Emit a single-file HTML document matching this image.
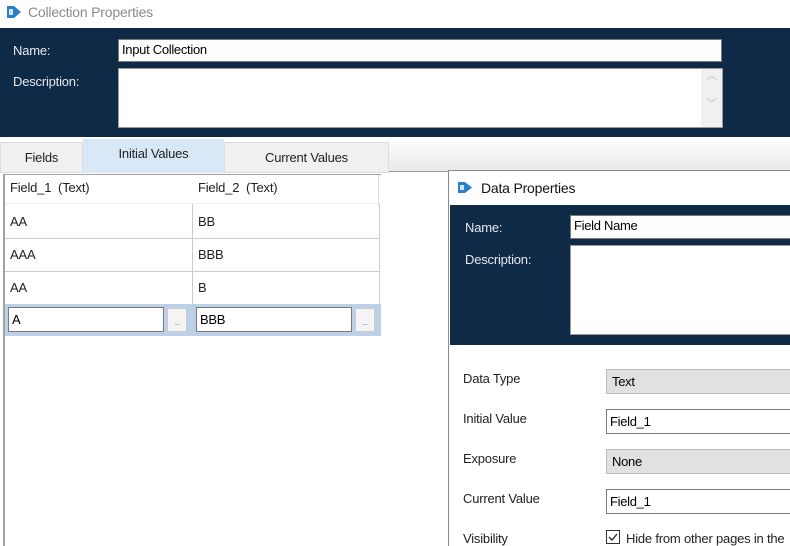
<!DOCTYPE html>
<html><head><style>
*{box-sizing:border-box;margin:0;padding:0}
html,body{width:790px;height:546px;overflow:hidden}
body{background:#fff;font-family:"Liberation Sans",sans-serif;font-size:13px;color:#000;position:relative;letter-spacing:-0.2px}
.a{position:absolute;white-space:nowrap}
.inp{position:absolute;background:#fff;border:1px solid #7a7a7a;padding:2px 3px;font-size:13px;letter-spacing:-0.3px;white-space:nowrap;overflow:hidden}
.lbl{position:absolute;color:#e6e9ee;font-size:13px}
.dl{position:absolute;color:#222;font-size:13px;white-space:nowrap}
.cell{position:absolute;font-size:13px;color:#222}
</style></head><body>
<svg class="a" style="left:6px;top:5px" width="16" height="14"><path d="M1 1h7l7 6-7 6H1z" fill="#2a7fc9"/><rect x="3" y="4" width="4" height="6" fill="#cfe3f5"/></svg>
<div class="a" style="left:28px;top:4px;font-size:14px;color:#8a8a8a">Collection Properties</div>
<div class="a" style="left:0;top:28px;width:790px;height:109px;background:#0e2a47"></div>
<div class="lbl" style="left:13px;top:43px">Name:</div>
<div class="lbl" style="left:13px;top:74px">Description:</div>
<div class="inp" style="left:118px;top:39px;width:604px;height:23px">Input Collection</div>
<div class="inp" style="left:118px;top:68px;width:605px;height:60px;border-color:#999"></div>
<div class="a" style="left:701px;top:69px;width:21px;height:58px;background:#f0f0f0;color:#bbb;font-size:11px;text-align:center;line-height:14px">︿<br><br>﹀</div>
<div class="a" style="left:380px;top:137px;width:410px;height:35px;background:linear-gradient(#fff,#e8e8e8);border-bottom:1px solid #999"></div>
<div class="a" style="left:0;top:142px;width:83px;height:31px;background:#f0f0f0;border:1px solid #ddd;text-align:center;line-height:30px;color:#222">Fields</div>
<div class="a" style="left:83px;top:139px;width:141px;height:34px;background:#d9e8f7;text-align:center;line-height:30px;color:#222">Initial Values</div>
<div class="a" style="left:224px;top:142px;width:165px;height:31px;background:#f0f0f0;border:1px solid #ddd;text-align:center;line-height:30px;color:#222">Current Values</div>
<div class="a" style="left:3px;top:174px;width:2px;height:372px;background:#a0a0a0"></div>
<div class="a" style="left:4px;top:174px;width:377px;height:1px;background:#a0a0a0"></div>
<div class="a" style="left:5px;top:175px;width:374px;height:29px;background:#fff;border-bottom:1px solid #eee"></div>
<div class="cell" style="left:10px;top:180px">Field_1&nbsp; (Text)</div>
<div class="cell" style="left:198px;top:180px">Field_2&nbsp; (Text)</div>
<div class="a" style="left:378px;top:175px;width:1px;height:30px;background:#ddd"></div>
<div class="a" style="left:5px;top:204px;width:375px;height:101px;border-right:1px solid #ccc"></div>
<div class="a" style="left:192px;top:204px;width:1px;height:100px;background:#ccc"></div>
<div class="a" style="left:5px;top:238px;width:375px;height:1px;background:#ccc"></div>
<div class="a" style="left:5px;top:271px;width:375px;height:1px;background:#ccc"></div>
<div class="a" style="left:5px;top:304px;width:375px;height:1px;background:#ccc"></div>
<div class="cell" style="left:10px;top:214px">AA</div><div class="cell" style="left:198px;top:214px">BB</div>
<div class="cell" style="left:10px;top:247px">AAA</div><div class="cell" style="left:198px;top:247px">BBB</div>
<div class="cell" style="left:10px;top:280px">AA</div><div class="cell" style="left:198px;top:280px">B</div>
<div class="a" style="left:5px;top:304px;width:376px;height:32px;background:#bcd0e8"></div>
<div class="inp" style="left:8px;top:307px;width:156px;height:25px;padding:4px 3px">A</div>
<div class="a" style="left:167px;top:308px;width:20px;height:24px;background:#f4f4f4;border:1px solid #ccc;font-size:9px;color:#666;text-align:center;line-height:26px">..</div>
<div class="inp" style="left:196px;top:307px;width:156px;height:25px;padding:4px 3px">BBB</div>
<div class="a" style="left:355px;top:308px;width:20px;height:24px;background:#f4f4f4;border:1px solid #ccc;font-size:9px;color:#666;text-align:center;line-height:26px">..</div>
<div class="a" style="left:448px;top:170px;width:342px;height:376px;background:#fff;border:1px solid #8a8a8a;border-right:none;border-bottom:none"></div>
<svg class="a" style="left:457px;top:181px" width="16" height="13"><path d="M1 1h7l7 5.5-7 5.5H1z" fill="#2a7fc9"/><rect x="3" y="4" width="4" height="5" fill="#cfe3f5"/></svg>
<div class="a" style="left:481px;top:180px;font-size:14px;color:#111">Data Properties</div>
<div class="a" style="left:450px;top:205px;width:340px;height:140px;background:#0e2a47"></div>
<div class="lbl" style="left:465px;top:220px">Name:</div>
<div class="lbl" style="left:465px;top:252px">Description:</div>
<div class="inp" style="left:570px;top:215px;width:220px;height:24px;border-right:none">Field Name</div>
<div class="inp" style="left:570px;top:245px;width:220px;height:90px;border-color:#999;border-right:none"></div>
<div class="dl" style="left:463px;top:371px">Data Type</div>
<div class="dl" style="left:463px;top:411px">Initial Value</div>
<div class="dl" style="left:463px;top:451px">Exposure</div>
<div class="dl" style="left:463px;top:491px">Current Value</div>
<div class="dl" style="left:463px;top:531px">Visibility</div>
<div class="inp" style="left:606px;top:369px;width:184px;height:25px;background:#e1e1e1;border-color:#bbb;border-right:none;padding:4px 5px">Text</div>
<div class="inp" style="left:606px;top:409px;width:184px;height:25px;border-right:none;padding:4px 3px">Field_1</div>
<div class="inp" style="left:606px;top:449px;width:184px;height:25px;background:#e1e1e1;border-color:#bbb;border-right:none;padding:4px 5px">None</div>
<div class="inp" style="left:606px;top:489px;width:184px;height:25px;border-right:none;padding:4px 3px">Field_1</div>
<svg class="a" style="left:606px;top:530px" width="15" height="15"><rect x="0.5" y="0.5" width="13" height="13" fill="#fff" stroke="#333"/><path d="M3 7l3 3 5-6" fill="none" stroke="#222" stroke-width="1.3"/></svg>
<div class="a" style="left:626px;top:531px;width:164px;overflow:hidden;color:#222">Hide from other pages in the</div>
</body></html>
